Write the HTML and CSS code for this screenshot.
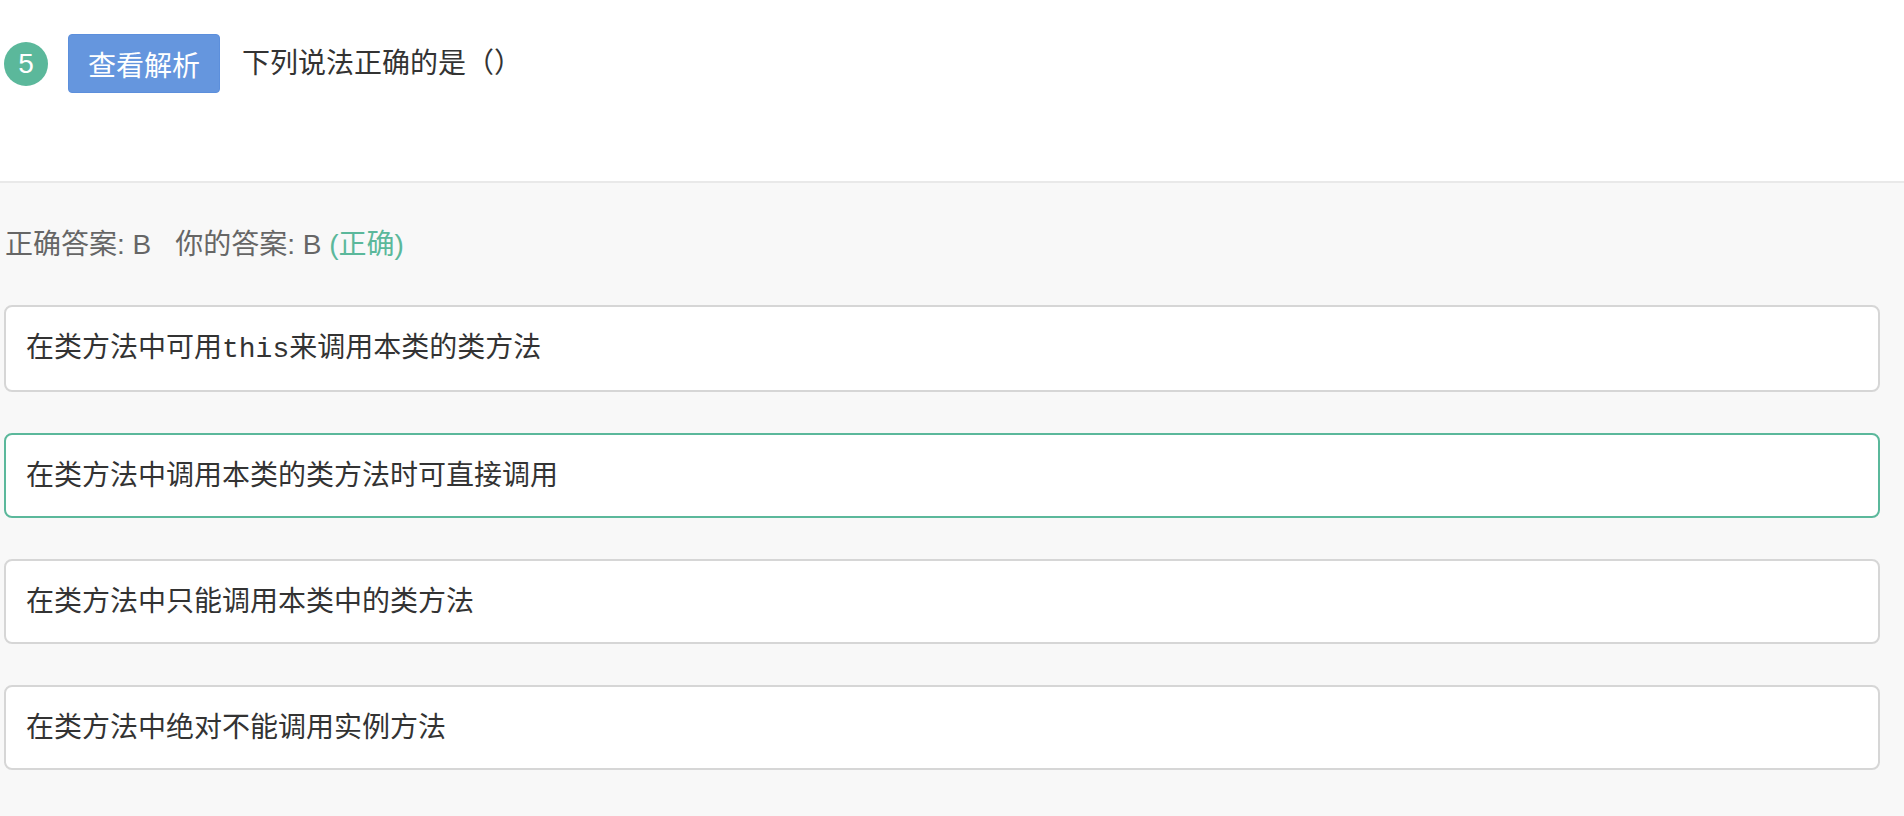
FILE: index.html
```html
<!DOCTYPE html>
<html lang="zh-CN">
<head>
  <meta charset="UTF-8" />
  <meta name="viewport" content="width=device-width, initial-scale=1" />
  <title>题目解析</title>
  <link rel="stylesheet" href="styles.css">
</head>
<body>

  <div class="question">
    <div class="question-row">
      <span class="num">5</span>
      <button class="btn">查看解析</button>
      <span class="title">下列说法正确的是（）</span>
    </div>
  </div>

  <div class="answers">
    <p class="result">
      <span class="gap">正确答案: B</span>你的答案: B <span class="ok">(正确)</span>
    </p>

    <div class="option">在类方法中可用<code>this</code>来调用本类的类方法</div>
    <div class="option selected">在类方法中调用本类的类方法时可直接调用</div>
    <div class="option">在类方法中只能调用本类中的类方法</div>
    <div class="option">在类方法中绝对不能调用实例方法</div>
  </div>

</body>
</html>
```

FILE: styles.css
```css
body {
  margin: 0;
  font-family: "Liberation Sans", "Noto Sans CJK SC", sans-serif;
  color: #333;
  background: #f8f8f8;
}

/* Cabecera de la pregunta */
.question {
  background: #fff;
  border-bottom: 2px solid #e9e9e9;
  padding: 34px 24px 88px 4px;
}

.question-row {
  display: flex;
  align-items: center;
  gap: 20px;
  height: 59px;
}

.num {
  width: 44px;
  height: 44px;
  border-radius: 50%;
  background: #5bb89b;
  color: #fff;
  font-size: 28px;
  display: flex;
  align-items: center;
  justify-content: center;
}

.btn {
  height: 59px;
  padding: 0 19px;
  background: #6596de;
  color: #fff;
  border: 1px solid #5c8fdc;
  border-radius: 4px;
  font-family: inherit;
  font-size: 28px;
}

.title {
  font-size: 28px;
  margin: 0 0 6px 2px;
}

/* Zona de respuestas */
.answers {
  padding: 44px 24px 47px 4px;
}

.result {
  margin: 0 0 42px 1px;
  font-size: 28px;
  line-height: 36px;
  color: #666;
}

.result .gap {
  margin-right: 24px;
}

.result .ok {
  color: #5bb89b;
}

.option {
  background: #fff;
  border: 2px solid #d6d6d6;
  border-radius: 8px;
  padding: 20px 20px;
  font-size: 28px;
  line-height: 41px;
  margin-bottom: 41px;
}

.option:last-child {
  margin-bottom: 0;
}

.option.selected {
  border-color: #5bb89b;
}

.option code {
  font-family: "Liberation Mono", monospace;
  font-size: 28px;
}
```
